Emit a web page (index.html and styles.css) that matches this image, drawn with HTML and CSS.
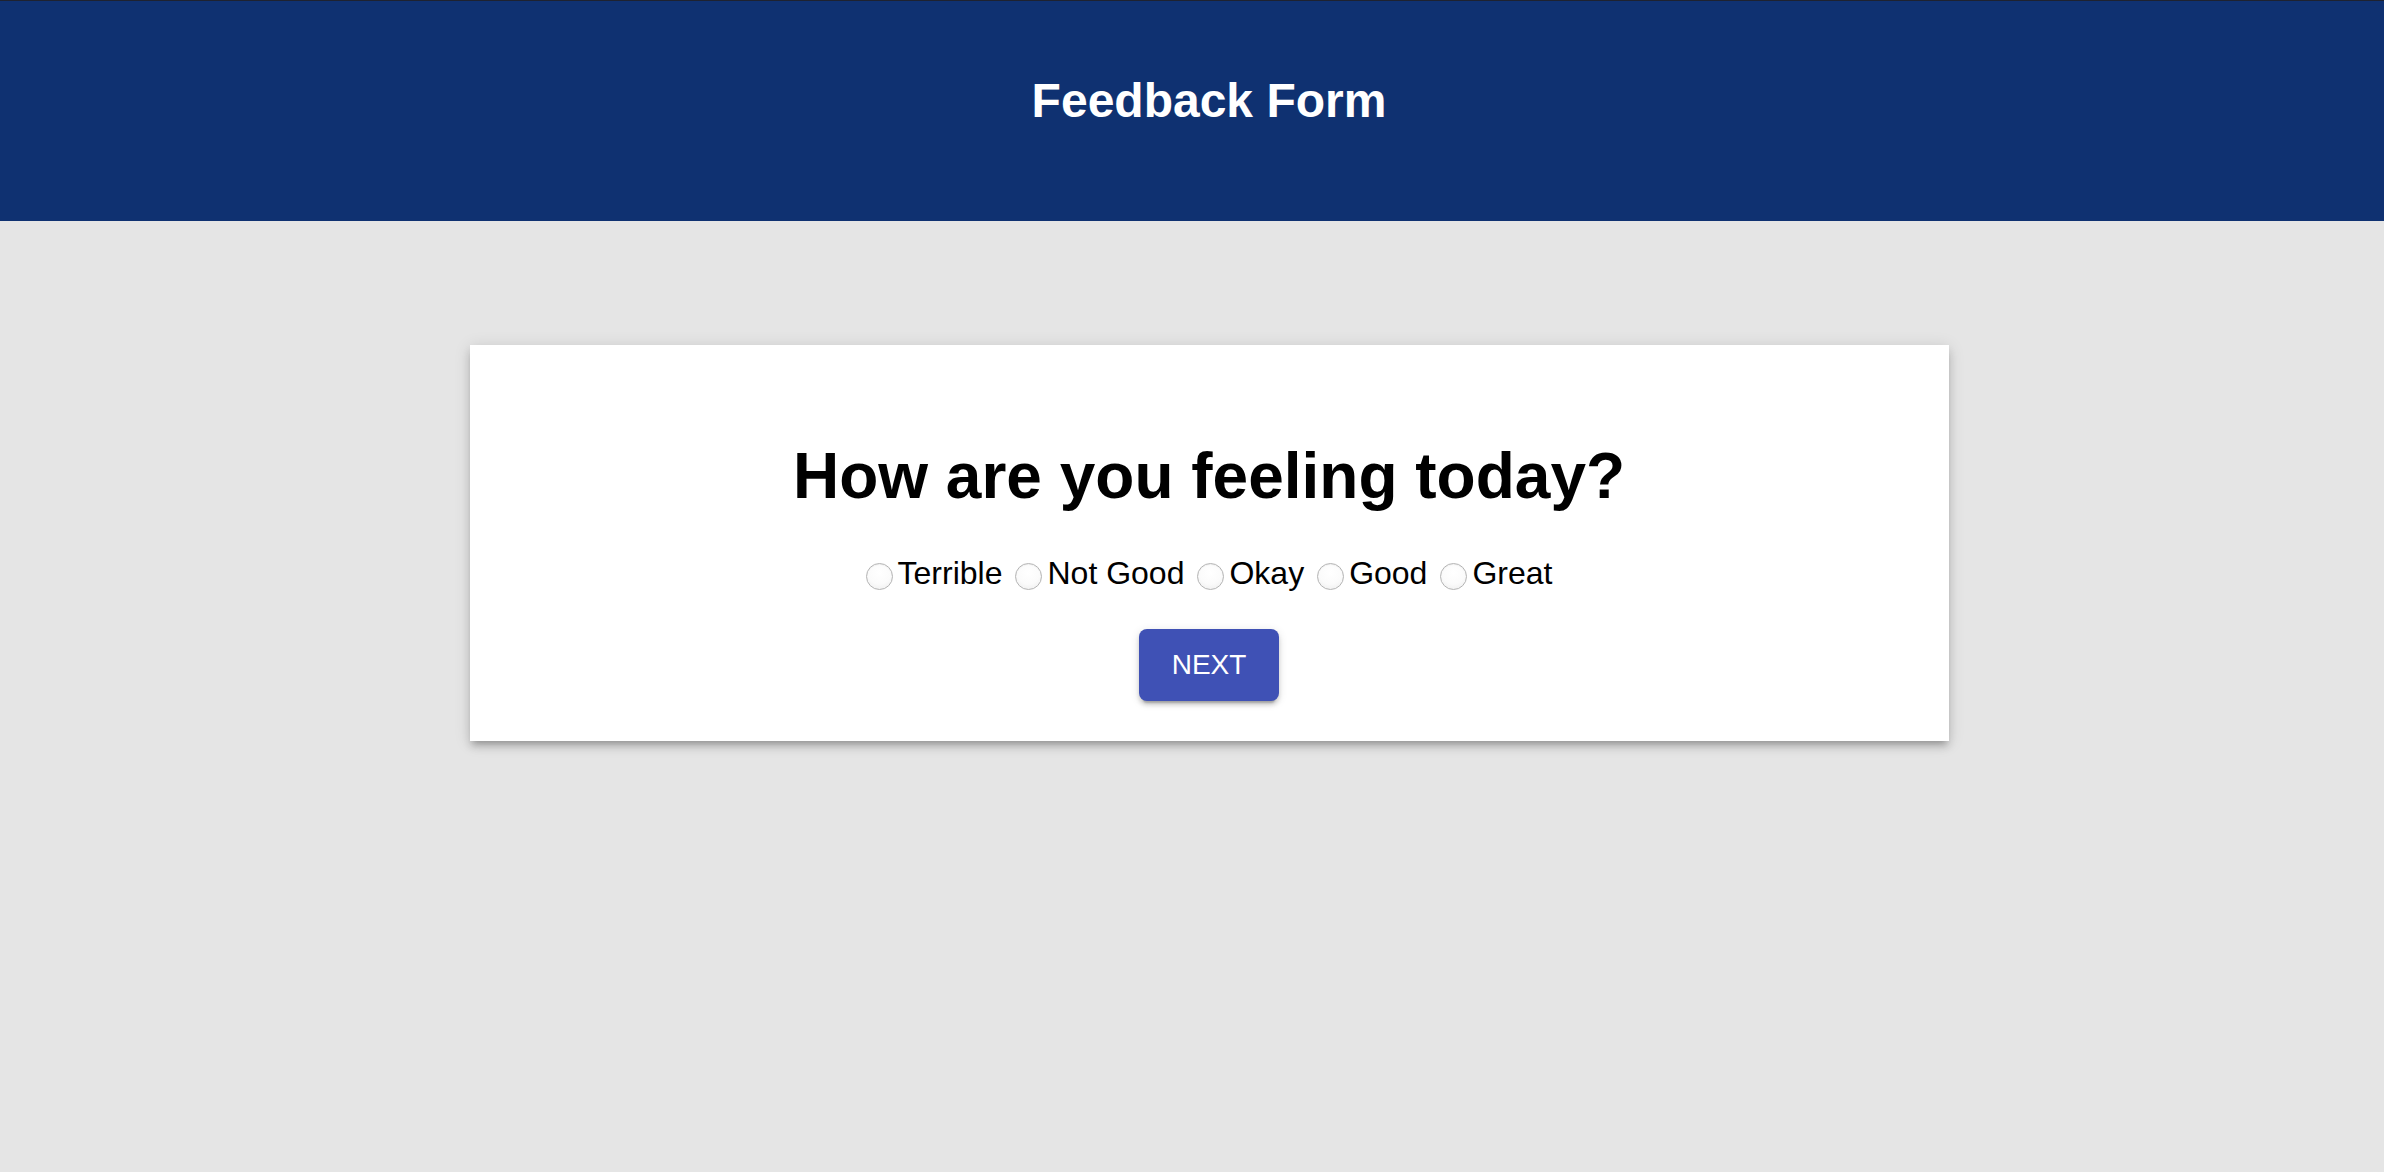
FILE: index.html
```html
<!DOCTYPE html>
<html lang="en">
<head>
<meta charset="utf-8">
<title>Feedback Form</title>
<link rel="stylesheet" href="styles.css">
</head>
<body>
  <header class="topbar">
    <h1 class="topbar-title">Feedback Form</h1>
  </header>
  <main class="page">
    <section class="card">
      <h2 class="question">How are you feeling today?</h2>
      <div class="options">
        <label class="option"><input type="radio" name="mood" class="radio"><span>Terrible</span></label>
        <label class="option"><input type="radio" name="mood" class="radio"><span>Not Good</span></label>
        <label class="option"><input type="radio" name="mood" class="radio"><span>Okay</span></label>
        <label class="option"><input type="radio" name="mood" class="radio"><span>Good</span></label>
        <label class="option"><input type="radio" name="mood" class="radio"><span>Great</span></label>
      </div>
      <button class="next-btn" type="button">NEXT</button>
    </section>
  </main>
</body>
</html>
```
FILE: styles.css
```css
html, body {
  margin: 0;
  padding: 0;
}
body {
  background: #e5e5e5;
  font-family: "Liberation Sans", Arial, Helvetica, sans-serif;
  min-height: 1172px;
}
.topbar {
  background: #0f3171;
  border-top: 1px solid #1e2230;
  padding: 72px 0 93px 34px;
  text-align: center;
}
.topbar-title {
  margin: 0;
  color: #ffffff;
  font-size: 48px;
  font-weight: 700;
  line-height: 55px;
}
.page {
  padding: 124px 0 0 34px;
}
.card {
  width: 1479px;
  margin: 0 auto;
  background: #ffffff;
  box-sizing: border-box;
  padding: 94px 0 40px;
  display: flex;
  flex-direction: column;
  align-items: center;
  box-shadow: 0 6px 6px -4px rgba(0,0,0,0.2), 0 6px 8px 0 rgba(0,0,0,0.14), 0 2px 16px 0 rgba(0,0,0,0.12);
}
.question {
  margin: 0;
  font-size: 64px;
  font-weight: 700;
  line-height: 74px;
  color: #000;
}
.options {
  margin-top: 42px;
  display: flex;
  align-items: center;
  gap: 13px;
  font-size: 32px;
  line-height: 37px;
  color: #000;
}
.option {
  display: flex;
  align-items: center;
  gap: 5px;
}
.radio {
  appearance: none;
  -webkit-appearance: none;
  width: 27px;
  height: 27px;
  margin: 5px 0 0 0;
  border-radius: 50%;
  border: 1px solid #b4b4b4;
  background: radial-gradient(circle at 50% 35%, #ffffff 0%, #fbfbfb 55%, #ebebeb 100%);
  box-shadow: inset 0 1px 1px rgba(0,0,0,0.05);
  box-sizing: border-box;
}
.next-btn {
  margin-top: 37px;
  width: 140px;
  height: 72px;
  border: none;
  border-radius: 8px;
  background: #3f51b5;
  color: #ffffff;
  font-family: "Liberation Sans", Arial, Helvetica, sans-serif;
  font-size: 28px;
  font-weight: 400;
  padding: 0;
  box-shadow: 0 6px 2px -4px rgba(0,0,0,0.2), 0 4px 4px 0 rgba(0,0,0,0.14), 0 2px 10px 0 rgba(0,0,0,0.12);
}
```
